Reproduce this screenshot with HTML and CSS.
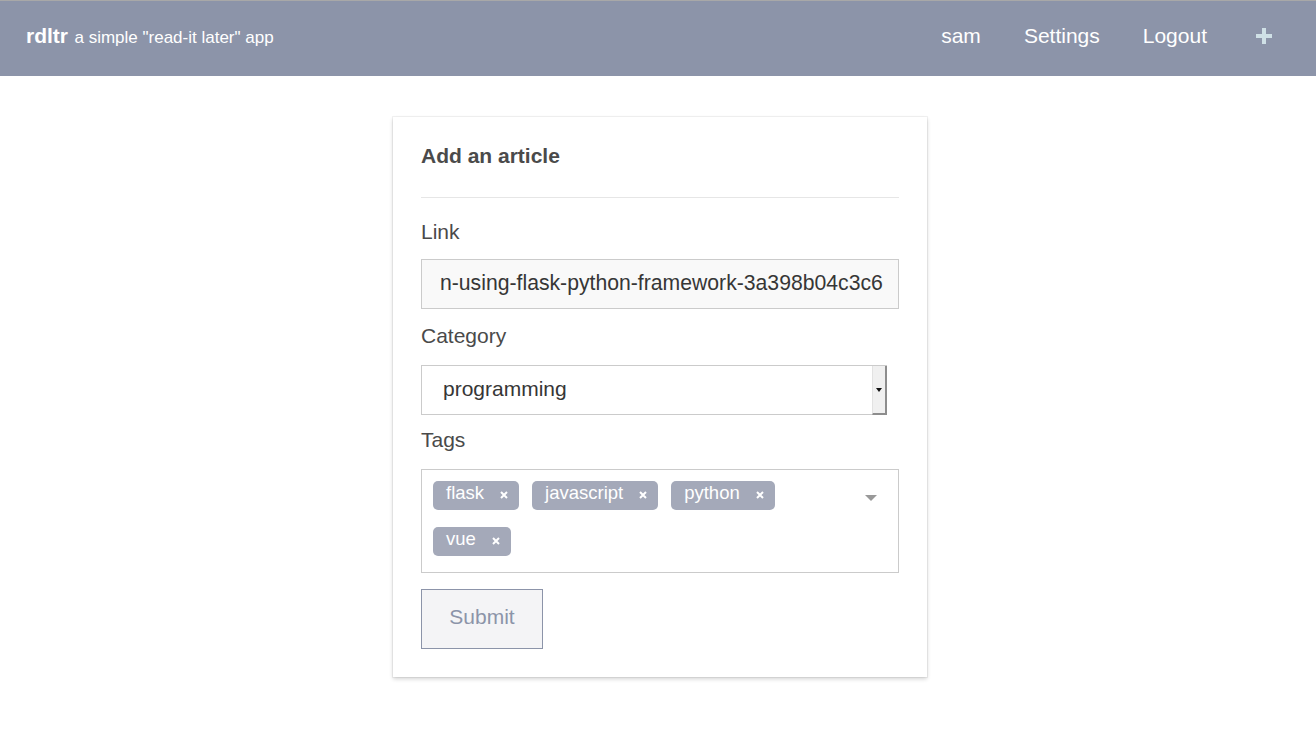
FILE: index.html
```html
<!DOCTYPE html>
<html lang="en">
<head>
<meta charset="utf-8">
<title>rdltr</title>
<link rel="stylesheet" href="styles.css">
</head>
<body>
<nav class="navbar">
  <div class="brand"><span class="brand-name">rdltr</span> <span class="brand-sub">a simple "read-it later" app</span></div>
  <div class="nav-menu">
    <a class="nav-item">sam</a>
    <a class="nav-item">Settings</a>
    <a class="nav-item">Logout</a>
    <a class="nav-item nav-plus" aria-label="Add">
      <svg width="16" height="16" viewBox="0 0 16 16"><rect x="6" y="0" width="4" height="16" fill="#cfe0e6"/><rect x="0" y="6" width="16" height="4" fill="#cfe0e6"/></svg>
    </a>
  </div>
</nav>
<main class="main">
  <section class="card">
    <h1 class="card-title">Add an article</h1>
    <hr class="divider">
    <div class="field field-link">
      <label class="label">Link</label>
      <div class="input">n-using-flask-python-framework-3a398b04c3c6</div>
    </div>
    <div class="field field-category">
      <label class="label">Category</label>
      <div class="select">
        <span class="select-value">programming</span>
        <span class="select-btn"><span class="select-caret"></span></span>
      </div>
    </div>
    <div class="field field-tags">
      <label class="label">Tags</label>
      <div class="tags">
        <span class="tag">flask<svg class="tag-x" width="8" height="8" viewBox="0 0 8 8"><path d="M1 1L7 7M7 1L1 7" stroke="#fff" stroke-width="2"/></svg></span>
        <span class="tag">javascript<svg class="tag-x" width="8" height="8" viewBox="0 0 8 8"><path d="M1 1L7 7M7 1L1 7" stroke="#fff" stroke-width="2"/></svg></span>
        <span class="tag">python<svg class="tag-x" width="8" height="8" viewBox="0 0 8 8"><path d="M1 1L7 7M7 1L1 7" stroke="#fff" stroke-width="2"/></svg></span>
        <span class="tag">vue<svg class="tag-x" width="8" height="8" viewBox="0 0 8 8"><path d="M1 1L7 7M7 1L1 7" stroke="#fff" stroke-width="2"/></svg></span>
        <span class="tags-caret"></span>
      </div>
    </div>
    <button class="submit" type="button">Submit</button>
  </section>
</main>
</body>
</html>
```
FILE: styles.css
```css
* { box-sizing: border-box; }
html, body { margin: 0; padding: 0; background: #fff; }
body {
  font-family: "Liberation Sans", Arial, sans-serif;
  color: #4a4a4a;
}
.navbar {
  display: flex;
  align-items: center;
  justify-content: space-between;
  height: 76px;
  border-top: 1px solid #a8a8a8;
  background: #8c94a9;
  padding: 0 44px 6px 26px;
}
.brand { color: #fff; white-space: nowrap; }
.brand-name { font-size: 21px; font-weight: bold; }
.brand-sub { font-size: 17px; margin-left: 2px; }
.nav-menu { display: flex; align-items: center; gap: 43px; }
.nav-item { color: #fff; font-size: 21px; line-height: 25px; }
.nav-plus { display: flex; margin-left: 6px; }
.main {
  display: flex;
  justify-content: center;
  padding: 41px 0 60px 4px;
}
.card {
  width: 534px;
  background: #fff;
  padding: 26px 28px 28px;
  box-shadow: 0 2px 4px rgba(10,10,10,0.18), 0 0 0 1px rgba(10,10,10,0.05);
}
.card-title {
  margin: 0;
  font-size: 21px;
  line-height: 25px;
  font-weight: bold;
  color: #4a4a4a;
}
.divider {
  margin: 29px 0 22px;
  border: 0;
  border-top: 1px solid #e6e6e6;
  height: 0;
}
.field { margin-bottom: 15px; }
.field-category { margin-bottom: 13px; }
.label {
  display: block;
  font-size: 21px;
  line-height: 24px;
  color: #4a4a4a;
  margin-bottom: 16px;
}
.field-link .label { margin-bottom: 15px; }
.field-category .label { margin-bottom: 17px; }
.field-tags .label { margin-bottom: 17px; }
.input {
  height: 50px;
  border: 1px solid #cbcbcb;
  background: #f9f9f9;
  font-size: 21.2px;
  line-height: 46px;
  color: #363636;
  padding: 0 14px 0 18px;
  white-space: nowrap;
  overflow: hidden;
}
.select {
  display: flex;
  width: 466px;
  height: 50px;
  border: 1px solid #cbcbcb;
  border-right: 0;
  font-size: 21px;
  color: #363636;
}
.select-value {
  flex: 1;
  line-height: 45px;
  padding-left: 21px;
}
.select-btn {
  width: 15px;
  background: #f0f0f0;
  border-left: 1px solid #e2e2e2;
  border-right: 2px solid #8d8d8d;
  border-bottom: 2px solid #8d8d8d;
  display: flex;
  align-items: center;
  justify-content: center;
  margin-bottom: -1px;
}
.select-caret {
  width: 0;
  height: 0;
  border-left: 3px solid transparent;
  border-right: 3px solid transparent;
  border-top: 4px solid #111;
  margin-top: 1px;
}
.tags {
  position: relative;
  display: flex;
  flex-wrap: wrap;
  align-content: flex-start;
  gap: 17px 13px;
  min-height: 104px;
  border: 1px solid #cbcbcb;
  padding: 11px 120px 16px 11px;
}
.tag {
  display: inline-flex;
  align-items: flex-start;
  background: #a4a9b9;
  color: #fff;
  border-radius: 5px;
  font-size: 18.5px;
  line-height: 18px;
  height: 29px;
  padding: 3px 11px 0 13px;
}
.tag-x { margin: 7px 0 0 16px; flex: none; }
.tags-caret {
  position: absolute;
  top: 25px;
  right: 21px;
  width: 0;
  height: 0;
  border-left: 6px solid transparent;
  border-right: 6px solid transparent;
  border-top: 6px solid #999;
}
.submit {
  display: block;
  margin-top: 16px;
  width: 122px;
  height: 60px;
  background: #f4f4f6;
  border: 1px solid #8c94a9;
  color: #8c94a9;
  font-family: "Liberation Sans", Arial, sans-serif;
  font-size: 21px;
  padding: 0 0 4px;
}
```
